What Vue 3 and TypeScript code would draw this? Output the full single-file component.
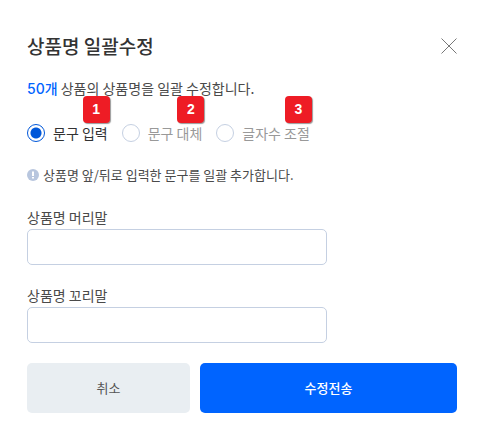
<script setup lang="ts">
import { ref } from 'vue'

interface Mode {
  value: string
  label: string
  step: number
}

const modes: Mode[] = [
  { value: 'insert', label: '문구 입력', step: 1 },
  { value: 'replace', label: '문구 대체', step: 2 },
  { value: 'length', label: '글자수 조절', step: 3 },
]

const count = ref<number>(50)
const mode = ref<string>('insert')
const prefix = ref<string>('')
const suffix = ref<string>('')
</script>

<template>
  <form class="dialog" role="dialog" aria-labelledby="dialog-title" @submit.prevent>
    <header class="head">
      <h1 id="dialog-title" class="title">상품명 일괄수정</h1>
      <button type="button" class="close" aria-label="닫기">
        <svg viewBox="0 0 16 16" width="16" height="16" fill="none" stroke="#777" stroke-width="1">
          <path d="M0.5 0.5L15.5 15.5M15.5 0.5L0.5 15.5" />
        </svg>
      </button>
    </header>

    <p class="summary"><strong>{{ count }}개</strong> 상품의 상품명을 일괄 수정합니다.</p>

    <div class="modes" role="radiogroup" aria-labelledby="dialog-title">
      <label v-for="m in modes" :key="m.value" class="mode">
        <input v-model="mode" class="radio" type="radio" name="mode" :value="m.value" />
        <span>{{ m.label }}</span>
        <span class="badge">{{ m.step }}</span>
      </label>
    </div>

    <p class="note">
      <svg class="info" viewBox="0 0 12 12" width="12" height="12" aria-hidden="true">
        <circle cx="6" cy="6" r="6" fill="#b8c6de" />
        <path d="M5 2.5h2V7H5z" fill="#fff" />
        <path d="M5 8h2v1.5H5z" fill="#fff" />
      </svg>
      <span>상품명 앞/뒤로 입력한 문구를 일괄 추가합니다.</span>
    </p>

    <div class="fields">
      <div class="field">
        <label for="prefix">상품명 머리말</label>
        <input id="prefix" v-model="prefix" type="text" />
      </div>
      <div class="field">
        <label for="suffix">상품명 꼬리말</label>
        <input id="suffix" v-model="suffix" type="text" />
      </div>
    </div>

    <footer class="actions">
      <button type="button" class="btn cancel">취소</button>
      <button type="submit" class="btn submit">수정전송</button>
    </footer>
  </form>
</template>

<style>
body {
  margin: 0;
  background: #fff;
}
</style>

<style scoped>
.dialog,
.dialog * {
  box-sizing: border-box;
}
.dialog {
  padding: 32px 26px 20px 27px;
  font-family: "Noto Sans CJK KR", sans-serif;
  font-size: 14px;
  line-height: 20px;
  color: #4a4a4a;
}
.head {
  display: flex;
  align-items: center;
  justify-content: space-between;
}
.title {
  margin: 0;
  font-size: 19px;
  line-height: 28px;
  font-weight: 500;
  color: #333;
}
.close {
  display: flex;
  padding: 0;
  border: 0;
  background: none;
  cursor: pointer;
}
.summary {
  margin: 18px 0 0;
}
.summary strong {
  font-family: Inter, "Noto Sans CJK KR", sans-serif;
  font-weight: 500;
  color: #0064ff;
}
.modes {
  display: flex;
  gap: 14px;
  margin-top: 24px;
}
.mode {
  position: relative;
  display: flex;
  align-items: center;
  gap: 8px;
  color: #999;
  cursor: pointer;
}
.mode:has(.radio:checked) {
  color: #333;
}
.radio {
  appearance: none;
  width: 18px;
  height: 18px;
  margin: 0;
  border: 1px solid #c5d0e2;
  border-radius: 50%;
  background: #fff;
}
.radio:checked {
  border-color: #0057d9;
  background: radial-gradient(circle, #0057d9 5px, #fff 6px);
}
.badge {
  position: absolute;
  right: -2px;
  bottom: 20px;
  width: 27px;
  height: 27px;
  border-radius: 4px;
  background: #ee1c25;
  box-shadow: 1px 1px 1px #999;
  color: #fff;
  font: 700 14px/27px "Liberation Sans", sans-serif;
  text-align: center;
}
.note {
  display: flex;
  align-items: center;
  gap: 4px;
  margin: 22px 0 0;
  font-size: 13px;
}
.fields {
  display: grid;
  gap: 20px;
  max-width: 300px;
  margin-top: 22px;
}
.field {
  display: grid;
  gap: 2px;
}
.field input {
  width: 100%;
  height: 36px;
  padding: 0 10px;
  border: 1px solid #c5d0e2;
  border-radius: 5px;
  background: #fff;
  font: inherit;
  color: #333;
}
.actions {
  display: grid;
  grid-template-columns: 163fr 257fr;
  gap: 10px;
  margin-top: 20px;
}
.btn {
  height: 50px;
  padding: 0;
  border: 0;
  border-radius: 5px;
  font: 500 13px/20px "Noto Sans CJK KR", sans-serif;
  cursor: pointer;
}
.cancel {
  background: #e9eef2;
  color: #555;
  font-weight: 400;
}
.submit {
  background: #0064ff;
  color: #fff;
}
</style>
